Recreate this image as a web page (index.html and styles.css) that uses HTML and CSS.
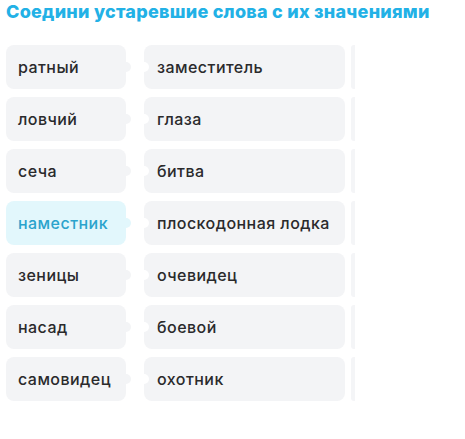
FILE: index.html
```html
<!DOCTYPE html>
<html lang="ru">
<head>
    <meta charset="UTF-8">
    <title>Соедини слова</title>
    <link rel="stylesheet" href="styles.css">
</head>
<body>
    <h1 class="task-title">Соедини устаревшие слова с их значениями</h1>

    <div class="match-list">
        <div class="match-row">
            <div class="word">ратный</div>
            <div class="meaning">заместитель</div>
            <div class="slot"></div>
        </div>
        <div class="match-row">
            <div class="word">ловчий</div>
            <div class="meaning">глаза</div>
            <div class="slot"></div>
        </div>
        <div class="match-row">
            <div class="word">сеча</div>
            <div class="meaning">битва</div>
            <div class="slot"></div>
        </div>
        <div class="match-row">
            <div class="word word-active">наместник</div>
            <div class="meaning">плоскодонная лодка</div>
            <div class="slot"></div>
        </div>
        <div class="match-row">
            <div class="word">зеницы</div>
            <div class="meaning">очевидец</div>
            <div class="slot"></div>
        </div>
        <div class="match-row">
            <div class="word">насад</div>
            <div class="meaning">боевой</div>
            <div class="slot"></div>
        </div>
        <div class="match-row">
            <div class="word">самовидец</div>
            <div class="meaning">охотник</div>
            <div class="slot"></div>
        </div>
    </div>
</body>
</html>
```

FILE: styles.css
```css
body {
    margin: 0;
    padding: 0 6px;
    background: #fff;
    color: #2a2a2c;
    font-family: Inter, "Noto Sans", sans-serif;
}
.task-title {
    margin: 1px 0 22px 0;
    font-size: 18px;
    font-weight: 800;
    line-height: 22px;
    color: #22b1e6;
    letter-spacing: 0.25px;
}
.match-list {
    display: flex;
    flex-direction: column;
    gap: 8px;
}
.match-row {
    display: flex;
    align-items: stretch;
    height: 44px;
}
.word,
.meaning {
    display: flex;
    align-items: center;
    position: relative;
    background: #f3f4f6;
    border-radius: 8px;
    font-size: 16px;
    font-weight: 500;
    letter-spacing: 0.45px;
    white-space: nowrap;
}
.word {
    width: 120px;
    padding-left: 12px;
    box-sizing: border-box;
    margin-right: 18px;
}
/* выступ-«пазл» справа у слова */
.word::after {
    content: "";
    position: absolute;
    right: -5px;
    top: 50%;
    width: 10px;
    height: 10px;
    margin-top: -5px;
    border-radius: 50%;
    background: inherit;
}
.word-active {
    background: #e2f7fc;
    color: #2aa3cc;
}
.meaning {
    width: 201px;
    padding-left: 13px;
    box-sizing: border-box;
}
/* выемка слева у значения */
.meaning::before {
    content: "";
    position: absolute;
    left: -5px;
    top: 50%;
    width: 10px;
    height: 10px;
    margin-top: -5px;
    border-radius: 50%;
    background: #fff;
}
.slot {
    width: 4px;
    margin-left: 6px;
    background: #f4f5f7;
    border-radius: 3px 0 0 3px;
}
```
